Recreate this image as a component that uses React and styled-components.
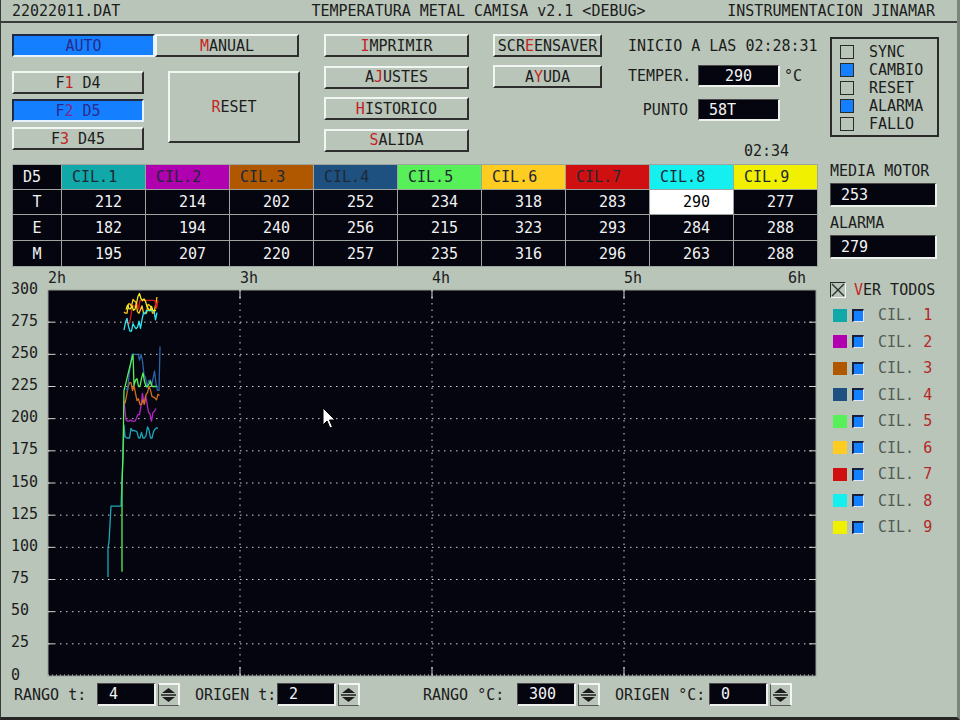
import React from "react";
import styled, { createGlobalStyle } from "styled-components";

const BG = "#b9c5b9";
const INK = "#1c1c1c";
const HOT = "#c42424";
const BLUE = "#1480ff";
const SCREEN = "#05050f";

const GlobalStyle = createGlobalStyle`
  html, body {
    margin: 0;
    padding: 0;
    background: ${BG};
  }
  body {
    font-family: "DejaVu Sans Mono", "Liberation Mono", monospace;
  }
`;

const Screen = styled.div`
  width: 960px;
  height: 720px;
  box-sizing: border-box;
  background: ${BG};
  color: ${INK};
  font-size: 15px;
  border-left: 1px solid #3a3a3a;
  border-right: 3px solid #7c847c;
  border-bottom: 3px solid #262626;
  display: flex;
  flex-direction: column;
  overflow: hidden;
  white-space: pre;
`;

const TitleBar = styled.header`
  height: 21px;
  border-bottom: 2px solid #3a3a3a;
  display: grid;
  grid-template-columns: 1fr auto 1fr;
  align-items: center;
  padding: 0 22px 0 11px;

  span:nth-child(2) {
    padding-left: 10px;
  }

  span:last-child {
    justify-self: end;
  }
`;

const TopSection = styled.section`
  height: 141px;
  box-sizing: border-box;
  padding: 11px 0 0 11px;
  display: flex;
  align-items: flex-start;
`;

const Column = styled.div`
  display: flex;
  flex-direction: column;
  width: ${(p) => p.$w}px;
  margin-left: ${(p) => p.$ml || 0}px;
  gap: ${(p) => p.$gap || 0}px;
`;

const Row = styled.div`
  display: flex;
  align-items: flex-start;
  gap: ${(p) => p.$gap || 0}px;
  margin-top: ${(p) => p.$mt || 0}px;
`;

const Key = styled.button`
  box-sizing: border-box;
  width: ${(p) => p.$w}px;
  height: ${(p) => p.$h || 23}px;
  margin: 0 0 0 ${(p) => p.$ml || 0}px;
  padding: 0;
  font: inherit;
  color: ${(p) => (p.$on ? "#2a2a8c" : INK)};
  background: ${(p) => (p.$on ? BLUE : BG)};
  border-style: solid;
  border-width: 2px;
  border-color: ${(p) =>
    p.$on ? "#1e2a44 #e8f2ff #e8f2ff #1e2a44" : "#f2f6f2 #2e2e2e #2e2e2e #f2f6f2"};
  display: flex;
  align-items: center;
  justify-content: center;
  white-space: pre;

  b {
    font-weight: normal;
    color: ${(p) => (p.$on ? "#7a2a8a" : HOT)};
  }
`;

const InfoPanel = styled.div`
  width: 176px;
  margin-left: 26px;
  display: flex;
  flex-direction: column;
`;

const InfoLine = styled.div`
  height: ${(p) => p.$h || 22}px;
  margin-top: ${(p) => p.$mt || 0}px;
  padding-left: ${(p) => p.$pl || 0}px;
  display: flex;
  align-items: center;
`;

const FieldLabel = styled.span`
  width: 70px;
  box-sizing: border-box;
  padding-right: 10px;
  text-align: right;
`;

const Readout = styled.div`
  box-sizing: border-box;
  width: ${(p) => p.$w}px;
  height: ${(p) => p.$h || 22}px;
  background: ${SCREEN};
  color: #f4f4f4;
  border-style: solid;
  border-width: 1px 2px 2px 1px;
  border-color: #4a4a4a #eef0ee #eef0ee #4a4a4a;
  display: flex;
  align-items: center;
  justify-content: ${(p) => (p.$center ? "center" : "flex-start")};
  padding-left: ${(p) => (p.$center ? 0 : p.$pl || 10)}px;
  margin-top: ${(p) => p.$mt || 0}px;
`;

const Unit = styled.span`
  margin-left: 4px;
`;

const StatusBox = styled.div`
  width: 109px;
  height: 100px;
  box-sizing: border-box;
  margin: 3px 0 0 26px;
  border: 2px solid #2a2a2a;
  padding: 4px 0 0 8px;
  display: flex;
  flex-direction: column;
`;

const StatusRow = styled.div`
  height: 18px;
  display: flex;
  align-items: center;
  gap: 15px;
`;

const Tick = styled.span`
  width: 14px;
  height: 14px;
  box-sizing: border-box;
  border: 1px solid #2a2a2a;
  background: ${(p) => (p.$on ? BLUE : "transparent")};
`;

const TableSection = styled.section`
  height: 104px;
  display: flex;
  align-items: flex-start;
  padding-left: 11px;
`;

const Grid = styled.div`
  display: grid;
  grid-template-columns: 48px repeat(9, 83px);
  grid-template-rows: 24px 24px 25px 25px;
  gap: 1px;
  background: #9ea49e;
  border: 1px solid #9ea49e;
`;

const Cell = styled.div`
  display: flex;
  align-items: center;
  justify-content: ${(p) =>
    p.$align === "right" ? "flex-end" : p.$align === "center" ? "center" : "flex-start"};
  padding: ${(p) =>
    p.$align === "right" ? "0 23px 0 0" : p.$align === "center" ? "0" : "0 0 0 10px"};
  background: ${(p) => p.$bg || SCREEN};
  color: ${(p) => p.$fg || "#f2f2f2"};
`;

const SidePanel = styled.div`
  width: 107px;
  margin-left: 12px;
  display: flex;
  flex-direction: column;
`;

const SideLabel = styled.div`
  height: 14px;
  line-height: 14px;
  margin-top: ${(p) => p.$mt || 0}px;
`;

const ChartSection = styled.section`
  height: 415px;
  display: flex;
  align-items: flex-start;
`;

const Legend = styled.div`
  margin-left: 12px;
  padding-top: 14px;
  display: flex;
  flex-direction: column;
`;

const LegendHead = styled.div`
  height: 16px;
  display: flex;
  align-items: center;
  gap: 8px;
  margin-bottom: 4px;

  b {
    font-weight: normal;
    color: ${HOT};
  }
`;

const XBox = styled.span`
  width: 16px;
  height: 16px;
  box-sizing: border-box;
  border-style: solid;
  border-width: 1px;
  border-color: #2a2a2a #f4f4f4 #f4f4f4 #2a2a2a;
  display: flex;
`;

const LegendItem = styled.div`
  height: 26.5px;
  display: flex;
  align-items: center;
  padding-left: 3px;
`;

const Swatch = styled.span`
  width: 14px;
  height: 13px;
  background: ${(p) => p.$c};
`;

const BlueCheck = styled.span`
  width: 12px;
  height: 13px;
  box-sizing: border-box;
  margin-left: 5px;
  background: ${BLUE};
  border-style: solid;
  border-width: 2px 1px 1px 2px;
  border-color: #16203a #dfe8ff #dfe8ff #16203a;
`;

const CylName = styled.span`
  margin-left: 14px;
  color: #545c54;

  b {
    font-weight: normal;
    color: #b42828;
  }
`;

const Controls = styled.footer`
  height: 23px;
  display: flex;
  align-items: center;
  padding-left: 13px;
`;

const CtlLabel = styled.span`
  width: ${(p) => p.$w}px;
  margin-left: ${(p) => p.$ml || 0}px;
`;

const SpinBox = styled.div`
  width: 22px;
  height: 23px;
  box-sizing: border-box;
  margin-left: 2px;
  border-style: solid;
  border-width: 2px 2px 1px 1px;
  border-color: #f4f4f4 #f4f4f4 #555 #555;
  display: flex;
  align-items: center;
  justify-content: center;
`;

const CYL = [
  { c: "#10a8a8", trace: "#1aa8b8" },
  { c: "#b000b0", trace: "#b424c4" },
  { c: "#b05800", trace: "#d0701c" },
  { c: "#1e5080", trace: "#2c64a8" },
  { c: "#58f058", trace: "#58f058" },
  { c: "#ffcc22", trace: "#ffc820" },
  { c: "#d01010", trace: "#d81818" },
  { c: "#14f0f0", trace: "#30e8f0" },
  { c: "#f0f000", trace: "#f0f020" },
];

const ROWS = [
  ["T", [212, 214, 202, 252, 234, 318, 283, 290, 277]],
  ["E", [182, 194, 240, 256, 215, 323, 293, 284, 288]],
  ["M", [195, 207, 220, 257, 235, 316, 296, 263, 288]],
];

const STATUS = [
  ["SYNC", false],
  ["CAMBIO", true],
  ["RESET", false],
  ["ALARMA", true],
  ["FALLO", false],
];

// plot geometry, in page pixels
const P = { x0: 48, x1: 816, y0: 290, y1: 676 };
const vy = (v) => P.y1 - (v * (P.y1 - P.y0)) / 300;

function rng(seed) {
  let s = seed;
  return () => {
    s = (s * 16807) % 2147483647;
    return s / 2147483647;
  };
}

function trace(seed, x0, x1, lo, hi, head = [], tail = []) {
  const r = rng(seed);
  const pts = [...head];
  let v = (lo + hi) / 2;
  for (let x = x0; x <= x1; x += 1.5) {
    v += (r() - 0.5) * (hi - lo) * 0.9;
    v = Math.max(lo, Math.min(hi, v));
    pts.push([x, v]);
  }
  return [...pts, ...tail].map(([x, val]) => `${x},${vy(val).toFixed(1)}`).join(" ");
}

const TRACES = [
  trace(11, 125, 158, 185, 208, [[108, 77], [108, 100], [109, 104], [110, 118], [111, 132], [121, 132], [122, 150], [123, 172], [124, 195]]),
  trace(23, 126, 157, 198, 222, [[124, 214]]),
  trace(37, 125, 160, 211, 228),
  trace(41, 126, 159, 222, 250, [], [[160, 256]]),
  trace(59, 134, 157, 225, 242, [[122, 81], [122, 150], [123, 172], [124, 222], [126, 228], [129, 238], [133, 250]]),
  trace(61, 124, 158, 282, 299),
  trace(73, 125, 158, 274, 292),
  trace(83, 124, 158, 268, 284),
  trace(97, 126, 156, 284, 299),
];

const HOURS = [2, 3, 4, 5, 6];

const Chart = () => {
  const hGrid = Array.from({ length: 11 }, (_, i) => vy((i + 1) * 25));
  const vGrid = [240, 432, 624];
  return (
    <svg width="817" height="415" viewBox="1 268 817 415">
      <g fontFamily="DejaVu Sans Mono, Liberation Mono, monospace" fontSize="15" fill={INK}>
        {Array.from({ length: 13 }, (_, i) => (
          <text key={i} x="11" y={vy(i * 25) + 3.5}>
            {String(i * 25)}
          </text>
        ))}
        {HOURS.map((h, i) => (
          <text key={h} x={i === 4 ? 788 : 48 + i * 192} y="283">
            {h}h
          </text>
        ))}
      </g>
      <rect x={P.x0} y={P.y0} width={P.x1 - P.x0} height={P.y1 - P.y0} fill={SCREEN} stroke="#9aa29a" />
      <g stroke="#d0d4d0" strokeWidth="1">
        {hGrid.map((y) => (
          <g key={y}>
            <line x1={P.x0} x2={P.x1} y1={y} y2={y} strokeDasharray="1.5 4.5" />
            <line x1={P.x0} x2={P.x0 + 6} y1={y} y2={y} />
            <line x1={P.x1 - 7} x2={P.x1} y1={y} y2={y} />
          </g>
        ))}
        {vGrid.map((x) => (
          <g key={x}>
            <line x1={x} x2={x} y1={P.y0} y2={P.y1} strokeDasharray="1.5 5" />
            <line x1={x} x2={x} y1={P.y0} y2={P.y0 + 9} />
            <line x1={x} x2={x} y1={P.y1 - 9} y2={P.y1} />
          </g>
        ))}
        <line x1={P.x0} x2={P.x1} y1={P.y1 - 1} y2={P.y1 - 1} strokeDasharray="1 3" />
      </g>
      <g fill="none" strokeWidth="1.3" strokeLinejoin="round">
        {TRACES.map((pts, i) => (
          <polyline key={i} points={pts} stroke={CYL[i].trace} />
        ))}
      </g>
      <path
        d="M323 408 L323 425 L327 421 L330 428 L332.5 427 L329.5 420 L335 420 Z"
        fill="#ffffff"
        stroke="#000000"
        strokeWidth="1"
      />
    </svg>
  );
};

const Spinner = () => (
  <SpinBox>
    <svg width="17" height="18" viewBox="0 0 17 18">
      <path d="M8.5 2 L15 7 L2 7 Z" fill={INK} />
      <line x1="1" y1="9" x2="16" y2="9" stroke={INK} strokeWidth="1.5" />
      <path d="M2 11 L15 11 L8.5 16 Z" fill={INK} />
    </svg>
  </SpinBox>
);

const Field = ({ label, value, w, ml }) => (
  <>
    <CtlLabel $w={w} $ml={ml}>{label}</CtlLabel>
    <Readout $w={59} $h={23} $pl={11}>{value}</Readout>
    <Spinner />
  </>
);

const App = () => (
  <Screen>
    <GlobalStyle />
    <TitleBar>
      <span>22022011.DAT</span>
      <span>TEMPERATURA METAL CAMISA v2.1 &lt;DEBUG&gt;</span>
      <span>INSTRUMENTACION JINAMAR</span>
    </TitleBar>

    <TopSection>
      <Column $w={288}>
        <Row>
          <Key $w={143} $on>
            AUTO
          </Key>
          <Key $w={144}>
            <b>M</b>ANUAL
          </Key>
        </Row>
        <Row $mt={14}>
          <Column $w={132} $gap={5}>
            <Key $w={132}>
              F<b>1</b> D4
            </Key>
            <Key $w={132} $on>
              F<b>2</b> D5
            </Key>
            <Key $w={132}>
              F<b>3</b> D45
            </Key>
          </Column>
          <Key $w={132} $h={72} $ml={24}>
            <b>R</b>ESET
          </Key>
        </Row>
      </Column>

      <Column $w={145} $ml={24} $gap={8.5}>
        <Key $w={145}>
          <b>I</b>MPRIMIR
        </Key>
        <Key $w={145}>
          A<b>J</b>USTES
        </Key>
        <Key $w={145}>
          <b>H</b>ISTORICO
        </Key>
        <Key $w={145}>
          <b>S</b>ALIDA
        </Key>
      </Column>

      <Column $w={109} $ml={24} $gap={8}>
        <Key $w={109}>
          SCR<b>E</b>ENSAVER
        </Key>
        <Key $w={109}>
          A<b>Y</b>UDA
        </Key>
      </Column>

      <InfoPanel>
        <InfoLine $h={23}>INICIO A LAS 02:28:31</InfoLine>
        <InfoLine $mt={8}>
          <FieldLabel>TEMPER.</FieldLabel>
          <Readout $w={82} $center>
            290
          </Readout>
          <Unit>°C</Unit>
        </InfoLine>
        <InfoLine $mt={12}>
          <FieldLabel>PUNTO</FieldLabel>
          <Readout $w={82}>58T</Readout>
        </InfoLine>
        <InfoLine $mt={21} $h={18} $pl={116}>
          02:34
        </InfoLine>
      </InfoPanel>

      <StatusBox>
        {STATUS.map(([name, on]) => (
          <StatusRow key={name}>
            <Tick $on={on} />
            <span>{name}</span>
          </StatusRow>
        ))}
      </StatusBox>
    </TopSection>

    <TableSection>
      <Grid>
        <Cell>D5</Cell>
        {CYL.map((cyl, i) => (
          <Cell key={i} $bg={cyl.c} $fg="#1e2834">
            CIL.{i + 1}
          </Cell>
        ))}
        {ROWS.map(([name, vals]) => (
          <React.Fragment key={name}>
            <Cell $align="center">{name}</Cell>
            {vals.map((v, i) => {
              const lit = name === "T" && i === 7;
              return (
                <Cell key={i} $align="right" $bg={lit ? "#ffffff" : undefined} $fg={lit ? "#000" : undefined}>
                  {v}
                </Cell>
              );
            })}
          </React.Fragment>
        ))}
      </Grid>
      <SidePanel>
        <SideLabel>MEDIA MOTOR</SideLabel>
        <Readout $w={107} $h={24} $mt={5}>253</Readout>
        <SideLabel $mt={9}>ALARMA</SideLabel>
        <Readout $w={107} $h={24} $mt={5}>279</Readout>
      </SidePanel>
    </TableSection>

    <ChartSection>
      <Chart />
      <Legend>
        <LegendHead>
          <XBox>
            <svg width="14" height="14" viewBox="0 0 14 14">
              <path d="M1 1 L13 13 M13 1 L1 13" stroke="#2a2a2a" strokeWidth="1.3" />
            </svg>
          </XBox>
          <span>
            <b>V</b>ER TODOS
          </span>
        </LegendHead>
        {CYL.map((cyl, i) => (
          <LegendItem key={i}>
            <Swatch $c={cyl.c} />
            <BlueCheck />
            <CylName>
              CIL. <b>{i + 1}</b>
            </CylName>
          </LegendItem>
        ))}
      </Legend>
    </ChartSection>

    <Controls>
      <Field label="RANGO t:" value="4" w={83} />
      <Field label="ORIGEN t:" value="2" w={82} ml={15} />
      <Field label="RANGO °C:" value="300" w={94} ml={63} />
      <Field label="ORIGEN °C:" value="0" w={94} ml={15} />
    </Controls>
  </Screen>
);

export default App;
